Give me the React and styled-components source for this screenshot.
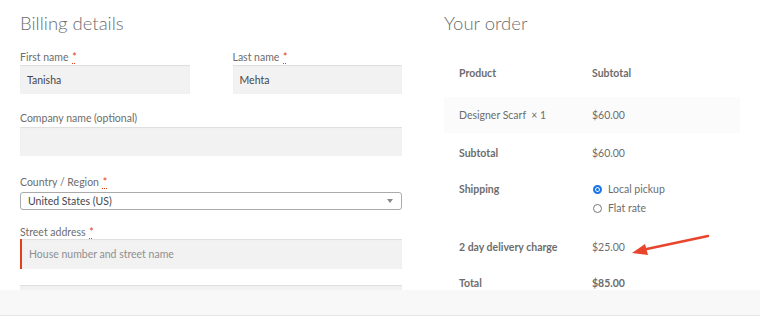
import React from "react";
import styled, { createGlobalStyle } from "styled-components";

const Global = createGlobalStyle`
  html, body {
    margin: 0;
    padding: 0;
    background: #fff;
  }
  body {
    font-family: "Lato", "Liberation Sans", sans-serif;
    color: #6d6d6d;
    font-size: 10.5px;
  }
`;

const Page = styled.div`
  display: flex;
  gap: 42px;
  padding: 12px 0 0 20px;
  width: 740px;
  box-sizing: border-box;
`;

const Billing = styled.div`
  width: 382px;
`;

const Order = styled.div`
  width: 296px;
  position: relative;
`;

const Heading = styled.h3`
  margin: 0 0 ${(p) => p.$mb ?? 15}px;
  font-size: 18.5px;
  font-weight: 300;
  line-height: 22px;
  color: #6d6d6d;
`;

const Row = styled.div`
  display: flex;
  gap: 43px;
`;

const Field = styled.div`
  flex: 1;
  margin-bottom: ${(p) => p.$mb ?? 16}px;
`;

const Label = styled.label`
  display: block;
  line-height: 16px;
  margin-bottom: ${(p) => p.$mb ?? 0}px;
  color: #6d6d6d;
`;

const Req = styled.abbr`
  color: #e2401c;
  text-decoration: underline dotted;
  text-underline-offset: 2px;
  margin-left: 1px;
`;

const Input = styled.div`
  box-sizing: border-box;
  height: ${(p) => p.$h ?? 29}px;
  background: #f2f2f2;
  box-shadow: inset 0 1px 1px rgba(0, 0, 0, 0.08);
  padding: 0 7px;
  display: flex;
  align-items: center;
  color: ${(p) => (p.$placeholder ? "#8f8f8f" : "#43454b")};
  border-left: ${(p) => (p.$error ? "2px solid #e2401c" : "none")};
`;

const Select = styled.div`
  box-sizing: border-box;
  height: 18px;
  border: 1px solid #aaa;
  border-radius: 3px;
  background: #fff;
  padding: 0 7px;
  display: flex;
  align-items: center;
  justify-content: space-between;
  color: #43454b;
`;

const Caret = styled.span`
  width: 0;
  height: 0;
  border-left: 3px solid transparent;
  border-right: 3px solid transparent;
  border-top: 4px solid #888;
  margin-right: 1px;
`;

const Table = styled.div``;

const TRow = styled.div`
  display: grid;
  grid-template-columns: 133px 1fr;
  padding: ${(p) => p.$pt ?? 11}px 15px ${(p) => p.$pb ?? 11}px;
  background: ${(p) => (p.$shade ? "#fbfbfb" : "transparent")};
  line-height: 16px;
`;

const Cell = styled.div`
  font-weight: ${(p) => (p.$bold ? 700 : 400)};
  color: #6d6d6d;
`;

const Options = styled.div`
  display: flex;
  flex-direction: column;
  gap: 3px;
`;

const Option = styled.div`
  display: flex;
  align-items: center;
  gap: 6px;
  margin-left: 1px;
`;

const Radio = styled.span`
  box-sizing: border-box;
  width: 9px;
  height: 9px;
  border-radius: 50%;
  border: ${(p) => (p.$on ? "2px solid #1a73e8" : "1px solid #777")};
  background: ${(p) => (p.$on ? "#1a73e8" : "#fff")};
  box-shadow: ${(p) => (p.$on ? "inset 0 0 0 1px #fff" : "none")};
`;

const Arrow = styled.svg`
  position: absolute;
  left: 182px;
  top: 217px;
  overflow: visible;
`;

const FooterBar = styled.div`
  position: fixed;
  left: 0;
  right: 0;
  bottom: 0;
  height: 35px;
  background: linear-gradient(
    to bottom,
    #f8f8f8 0,
    #f8f8f8 25px,
    #e6e6e6 25px,
    #e6e6e6 26px,
    #fff 26px
  );
`;

export default function App() {
  return (
    <>
      <Global />
      <Page>
        <Billing>
          <Heading>Billing details</Heading>
          <Row>
            <Field>
              <Label>
                First name <Req>*</Req>
              </Label>
              <Input>Tanisha</Input>
            </Field>
            <Field>
              <Label>
                Last name <Req>*</Req>
              </Label>
              <Input>Mehta</Input>
            </Field>
          </Row>
          <Field $mb={18}>
            <Label $mb={1}>Company name (optional)</Label>
            <Input />
          </Field>
          <Field $mb={14}>
            <Label $mb={2}>
              Country / Region <Req>*</Req>
            </Label>
            <Select>
              United States (US)
              <Caret />
            </Select>
          </Field>
          <Field>
            <Label $mb={-1}>
              Street address <Req>*</Req>
            </Label>
            <Input $h={30} $error $placeholder>
              House number and street name
            </Input>
          </Field>
          <Input $h={30} />
        </Billing>
        <Order>
          <Heading $mb={21}>Your order</Heading>
          <Table>
            <TRow $pt={10} $pb={16}>
              <Cell $bold>Product</Cell>
              <Cell $bold>Subtotal</Cell>
            </TRow>
            <TRow $shade $pt={10} $pb={10}>
              <Cell>Designer Scarf&nbsp; × 1</Cell>
              <Cell>$60.00</Cell>
            </TRow>
            <TRow $pt={12}>
              <Cell $bold>Subtotal</Cell>
              <Cell>$60.00</Cell>
            </TRow>
            <TRow $pt={9} $pb={12}>
              <Cell $bold>Shipping</Cell>
              <Options>
                <Option>
                  <Radio $on />
                  Local pickup
                </Option>
                <Option>
                  <Radio />
                  Flat rate
                </Option>
              </Options>
            </TRow>
            <TRow $pb={9}>
              <Cell $bold>2 day delivery charge</Cell>
              <Cell>$25.00</Cell>
            </TRow>
            <TRow>
              <Cell $bold>Total</Cell>
              <Cell $bold>$85.00</Cell>
            </TRow>
          </Table>
          <Arrow width="90" height="30">
            <line
              x1="82"
              y1="7"
              x2="16"
              y2="21"
              stroke="#e8452c"
              strokeWidth="2.5"
              strokeLinecap="round"
            />
            <polygon points="6,24 19,15 22,26" fill="#e8452c" />
          </Arrow>
        </Order>
      </Page>
      <FooterBar />
    </>
  );
}
